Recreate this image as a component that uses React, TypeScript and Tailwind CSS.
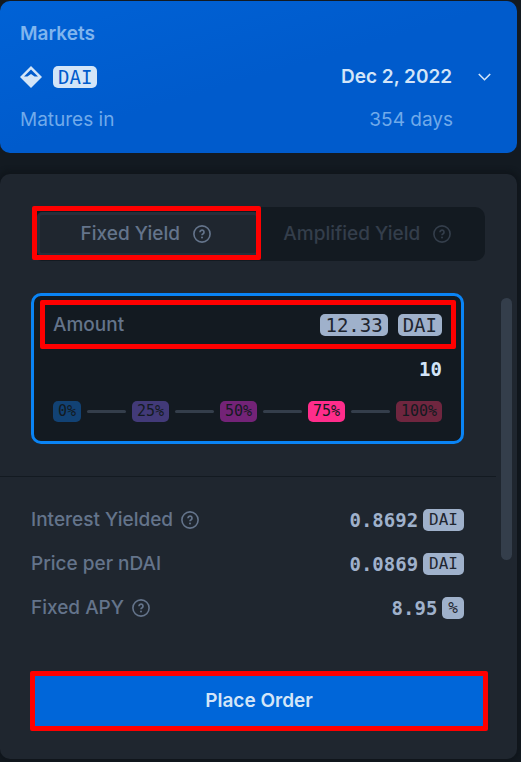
import { Fragment, useState } from 'react';
import clsx from 'clsx';

const PERCENTAGES = [
  { value: 0, color: 'bg-[#124274]' },
  { value: 25, color: 'bg-[#423a78]' },
  { value: 50, color: 'bg-[#732377]' },
  { value: 75, color: 'bg-[#ff2d8b]' },
  { value: 100, color: 'bg-[#6f263f]' },
];

interface PillProps {
  children: React.ReactNode;
  size?: 'sm' | 'lg';
  className?: string;
}

function Pill({ children, size = 'lg', className = 'bg-[#9fb1cb] text-[#1f2630]' }: PillProps) {
  return (
    <span
      className={clsx(
        'inline-block h-[22px] rounded-[5px] font-["DejaVu_Sans_Mono",monospace] leading-[22px]',
        size === 'lg' ? 'px-[5px] text-[19px]' : 'px-[6px] text-[16px]',
        className
      )}
    >
      {children}
    </span>
  );
}

function HelpIcon() {
  return (
    <svg viewBox="0 0 18 18" className="h-[18px] w-[18px] shrink-0" fill="none" stroke="currentColor" aria-hidden="true">
      <circle cx="9" cy="9" r="8.1" strokeWidth="1.6" />
      <path d="M7 7.2a2 2 0 1 1 3.1 1.6C9.3 9.3 9 9.6 9 10.3" strokeWidth="1.7" />
      <circle cx="9" cy="12.4" r="1" fill="currentColor" stroke="none" />
    </svg>
  );
}

function DiamondLogo() {
  return (
    <svg viewBox="0 0 22 22" className="h-[22px] w-[22px]" aria-hidden="true">
      <path d="M11 0 22 11 11 22 0 11Z" fill="#d3e5f8" />
      <path d="M11 3.6 18 10.6H14.6L11 8 7.4 10.6H4Z" fill="#005bcc" />
    </svg>
  );
}

function Highlight({ className }: { className: string }) {
  return <span className={clsx('pointer-events-none absolute rounded-[2px] border-5 border-[#ff0000]', className)} />;
}

interface StatRowProps {
  label: string;
  value: string;
  unit: string;
  help?: boolean;
}

function StatRow({ label, value, unit, help }: StatRowProps) {
  return (
    <div className="flex h-11 items-center justify-between">
      <dt className="flex items-center gap-2 font-medium text-[#64748b]">
        {label}
        {help && <HelpIcon />}
      </dt>
      <dd className="flex items-center gap-[5px]">
        <span className='font-["DejaVu_Sans_Mono",monospace] font-bold text-[#9fb1cb]'>{value}</span>
        <Pill size="sm">{unit}</Pill>
      </dd>
    </div>
  );
}

function MarketCard() {
  return (
    <section className="mr-1 rounded-[10px] bg-linear-to-br from-[#0062d6] via-[#005bcc] to-[#005bcc] pt-[21px] pr-[26px] pb-[21px] pl-5">
      <h2 className="font-semibold text-[#80b5ee]">Markets</h2>
      <div className="mt-[19px] flex items-center">
        <DiamondLogo />
        <Pill className="ml-[11px] bg-[#d3e5f8] text-[#005bcc]">DAI</Pill>
        <div className="relative ml-auto">
          <select
            aria-label="Maturity date"
            className="block h-6 cursor-pointer appearance-none bg-transparent pr-[38px] font-semibold text-[#d3e5f8] outline-none"
          >
            <option>Dec 2, 2022</option>
          </select>
          <svg
            viewBox="0 0 13 8"
            className="pointer-events-none absolute top-2 right-0 h-2 w-[13px]"
            fill="none"
            stroke="#d3e5f8"
            strokeWidth="1.6"
            aria-hidden="true"
          >
            <path d="m.8 1 5.7 5.7L12.2 1" />
          </svg>
        </div>
      </div>
      <div className="mt-[19px] flex justify-between pr-[38px] text-[#70aaea]">
        <span>Matures in</span>
        <span>354 days</span>
      </div>
    </section>
  );
}

export default function App() {
  const [amount, setAmount] = useState('10');
  const [percent, setPercent] = useState(75);

  return (
    <main className='min-h-screen bg-[#131a21] pt-px font-["Inter",sans-serif] text-[19px] leading-6'>
      <MarketCard />

      <section className="mt-[21px] mr-1 rounded-[10px] bg-[#1f262f] pt-[33px] pb-[33px] shadow-[0_0_4px_4px_#10161c]">
        <div className="mx-8 grid h-[54px] grid-cols-2 rounded-[10px] bg-[#131a21] p-[5px]" role="tablist">
          <button
            type="button"
            role="tab"
            aria-selected="true"
            className="relative flex items-center justify-center gap-[13px] rounded-[5px] border-3 border-[#262f3b] bg-[#1f262f] pr-1 font-medium text-[#64748b]"
          >
            Fixed Yield
            <HelpIcon />
            <Highlight className="-top-[9px] -right-[5px] -bottom-[7px] -left-2" />
          </button>
          <button
            type="button"
            role="tab"
            aria-selected="false"
            className="flex items-center justify-center gap-[13px] pr-1 font-medium text-[#343e4b]"
          >
            Amplified Yield
            <HelpIcon />
          </button>
        </div>

        <div className="mt-8 flex items-start">
          <div className="flex-1">
            <div className="relative mr-8 ml-[31px] rounded-[10px] border-3 border-[#0a84f5] bg-[#131a21] px-[19px] pt-[17px] pb-[19px]">
              <Highlight className="top-1 right-[5px] left-[6px] h-[49px]" />
              <div className="flex h-6 items-center">
                <label htmlFor="amount" className="mr-auto font-medium text-[#64748b]">
                  Amount
                </label>
                <Pill>12.33</Pill>
                <Pill className="ml-[10px] bg-[#9fb1cb] text-[#1f2630]">DAI</Pill>
              </div>
              <input
                id="amount"
                type="text"
                value={amount}
                onChange={(e) => setAmount(e.target.value)}
                className='mt-5 block h-6 w-full bg-transparent text-right font-["DejaVu_Sans_Mono",monospace] font-bold text-[#d3e5f8] outline-none'
              />
              <div className="mt-5 flex items-center gap-[6px]">
                {PERCENTAGES.map(({ value, color }) => (
                  <Fragment key={value}>
                    {value > 0 && <span className="h-[3px] flex-1 rounded-full bg-[#343e4b]" />}
                    <button
                      type="button"
                      aria-pressed={percent === value}
                      onClick={() => setPercent(value)}
                      className={clsx(
                        'h-[21px] rounded-[5px] px-[5px] font-["DejaVu_Sans_Mono",monospace] text-[15px] leading-[21px] text-[#131a21]',
                        color
                      )}
                    >
                      {value}%
                    </button>
                  </Fragment>
                ))}
              </div>
            </div>

            <dl className="mt-8 border-t border-[#131a21] pt-[21px] pr-8 pl-[31px]">
              <StatRow label="Interest Yielded" value="0.8692" unit="DAI" help />
              <StatRow label="Price per nDAI" value="0.0869" unit="DAI" />
              <StatRow label="Fixed APY" value="8.95" unit="%" help />
            </dl>
          </div>
          <div className="mx-[5px] mt-[5px] h-[262px] w-[11px] rounded-full bg-[#343e4b]" />
        </div>

        <div className="relative mt-[46px] mr-[34px] ml-[35px]">
          <button type="button" className="block h-[50px] w-full bg-[#0066d9] font-semibold text-[#d3e5f8]">
            Place Order
          </button>
          <Highlight className="-inset-[5px]" />
        </div>
      </section>
    </main>
  );
}
